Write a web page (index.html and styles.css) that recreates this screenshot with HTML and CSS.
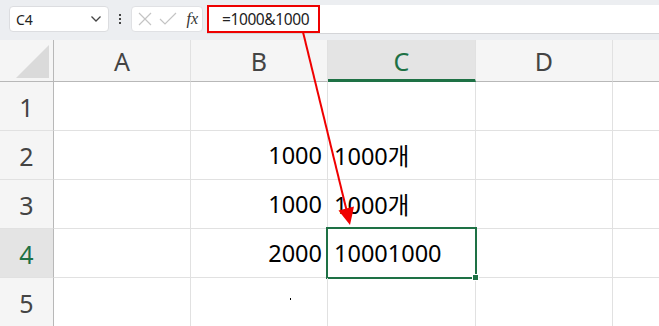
FILE: index.html
```html
<!DOCTYPE html>
<html lang="ko">
<head>
  <meta charset="UTF-8">
  <title>Sheet</title>
  <link rel="stylesheet" href="styles.css">
</head>
<body>

<div class="toolbar">
  <div class="namebox">
    <span>C4</span>
    <svg width="12" height="8" viewBox="0 0 12 8"><path d="M1.5 1.5 L6 6 L10.5 1.5" fill="none" stroke="#444" stroke-width="1.3"/></svg>
  </div>
  <div class="dots"><i></i><i></i><i></i></div>
  <div class="fxbox">
    <svg width="16" height="16" viewBox="0 0 16 16"><path d="M2 2 L14 14 M14 2 L2 14" stroke="#c4c4c4" stroke-width="1.2"/></svg>
    <svg width="18" height="16" viewBox="0 0 18 16"><path d="M1 8 L6 13 L17 2" fill="none" stroke="#c4c4c4" stroke-width="1.2"/></svg>
    <span class="fx">fx</span>
  </div>
  <div class="formula">
    <span class="formula-text">=1000&amp;1000</span>
  </div>
</div>

<div class="grid">
  <div class="corner"><svg width="34" height="34" viewBox="0 0 34 34"><polygon points="0,34 33,34 33,1" fill="#dadada"/></svg></div>
  <div class="colhead">A</div>
  <div class="colhead">B</div>
  <div class="colhead active">C</div>
  <div class="colhead">D</div>
  <div class="colhead last"></div>

  <div class="rowhead">1</div>
  <div class="cell"></div><div class="cell"></div><div class="cell"></div><div class="cell"></div><div class="cell last"></div>

  <div class="rowhead">2</div>
  <div class="cell"></div><div class="cell num">1000</div><div class="cell">1000개</div><div class="cell"></div><div class="cell last"></div>

  <div class="rowhead">3</div>
  <div class="cell"></div><div class="cell num">1000</div><div class="cell">1000개</div><div class="cell"></div><div class="cell last"></div>

  <div class="rowhead active">4</div>
  <div class="cell"></div><div class="cell num">2000</div><div class="cell selected">10001000</div><div class="cell"></div><div class="cell last"></div>

  <div class="rowhead">5</div>
  <div class="cell"></div><div class="cell"><span class="speck"></span></div><div class="cell"></div><div class="cell"></div><div class="cell last"></div>
</div>

<svg class="arrow" width="659" height="326" viewBox="0 0 659 326">
  <line x1="303" y1="32" x2="347" y2="212" stroke="#f00000" stroke-width="2"/>
  <polygon points="350,225 354,206.5 338.5,210.5" fill="#f00000"/>
</svg>

</body>
</html>
```

FILE: styles.css
```css
body {
  margin: 0;
  width: 659px;
  height: 326px;
  overflow: hidden;
  position: relative;
  font-family: "Noto Sans", "Noto Sans CJK KR", sans-serif;
  background: #fff;
  color: #000;
}

/* formula bar */
.toolbar {
  height: 40px;
  background: #eceef1;
  display: flex;
  align-items: flex-start;
  box-sizing: border-box;
  padding-top: 5px;
}
.namebox {
  margin: 1px 0 0 9px;
  width: 100px;
  height: 26px;
  box-sizing: border-box;
  background: #fff;
  border: 1px solid #dcdde0;
  border-radius: 4px;
  display: flex;
  align-items: center;
  justify-content: space-between;
  padding: 0 6px 0 6px;
  font-size: 14px;
  color: #222;
}
.dots {
  width: 22px;
  height: 28px;
  display: flex;
  flex-direction: column;
  align-items: center;
  justify-content: center;
  gap: 2px;
}
.dots i {
  width: 2px;
  height: 2px;
  background: #444;
}
.fxbox {
  margin-top: 1px;
  width: 72px;
  height: 26px;
  box-sizing: border-box;
  background: #fff;
  border: 1px solid #e0e1e4;
  border-radius: 4px;
  display: flex;
  align-items: center;
  padding: 0 4px 0 5px;
  gap: 6px;
}
.fx {
  margin-left: auto;
  font-family: "Liberation Serif", serif;
  font-style: italic;
  font-size: 16px;
  color: #333;
}
.formula {
  margin-left: 4px;
  flex: 1;
  height: 28px;
  background: #fff;
  border-bottom: 1px solid #d4d5d8;
  display: flex;
}
.formula-text {
  width: 113px;
  box-sizing: border-box;
  border: 2px solid #ee0000;
  font-size: 15.5px;
  letter-spacing: -0.4px;
  color: #222;
  padding: 1px 0 0 13px;
  line-height: 22px;
}

/* sheet */
.grid {
  display: grid;
  grid-template-columns: 54px 137px 137px 148px 137px 1fr;
  grid-template-rows: 42px repeat(5, 49px);
}
.corner, .colhead, .rowhead, .cell {
  box-sizing: border-box;
  border-right: 1px solid #e1e1e1;
  border-bottom: 1px solid #e1e1e1;
}
.corner {
  background: #f5f5f5;
  border-right: 1px solid #b8b8b8;
  border-bottom: 1px solid #b8b8b8;
  display: flex;
  align-items: flex-end;
  justify-content: flex-end;
  padding: 0 3px 3px 0;
}
.colhead, .rowhead {
  background: #f5f5f5;
  color: #444;
  font-size: 25px;
  display: flex;
  align-items: center;
  justify-content: center;
}
.colhead {
  border-bottom: 1px solid #b8b8b8;
  padding-top: 1px;
}
.rowhead {
  border-right: 1px solid #b8b8b8;
  padding-top: 2px;
}
.colhead.active {
  background: #e4e4e4;
  color: #1e7145;
  border-bottom: 3px solid #1e7145;
  padding-top: 3px;
}
.rowhead.active {
  background: #e4e4e4;
  color: #1e7145;
}
.last {
  border-right: none;
}
.cell {
  font-size: 23.5px;
  display: flex;
  align-items: center;
  padding: 0 5px 0 6px;
  white-space: nowrap;
  position: relative;
}
.cell.num {
  justify-content: flex-end;
}
.cell.selected::after {
  content: "";
  position: absolute;
  left: -2px;
  top: -2px;
  right: -2px;
  bottom: -2px;
  border: 2px solid #1e7145;
}
.cell.selected::before {
  content: "";
  position: absolute;
  right: -4px;
  bottom: -4px;
  width: 5px;
  height: 5px;
  background: #1e7145;
  border: 1px solid #fff;
  z-index: 1;
}
.speck {
  position: absolute;
  left: 99px;
  top: 20px;
  width: 1px;
  height: 2px;
  background: #000;
}
.arrow {
  position: absolute;
  left: 0;
  top: 0;
  pointer-events: none;
}
```
